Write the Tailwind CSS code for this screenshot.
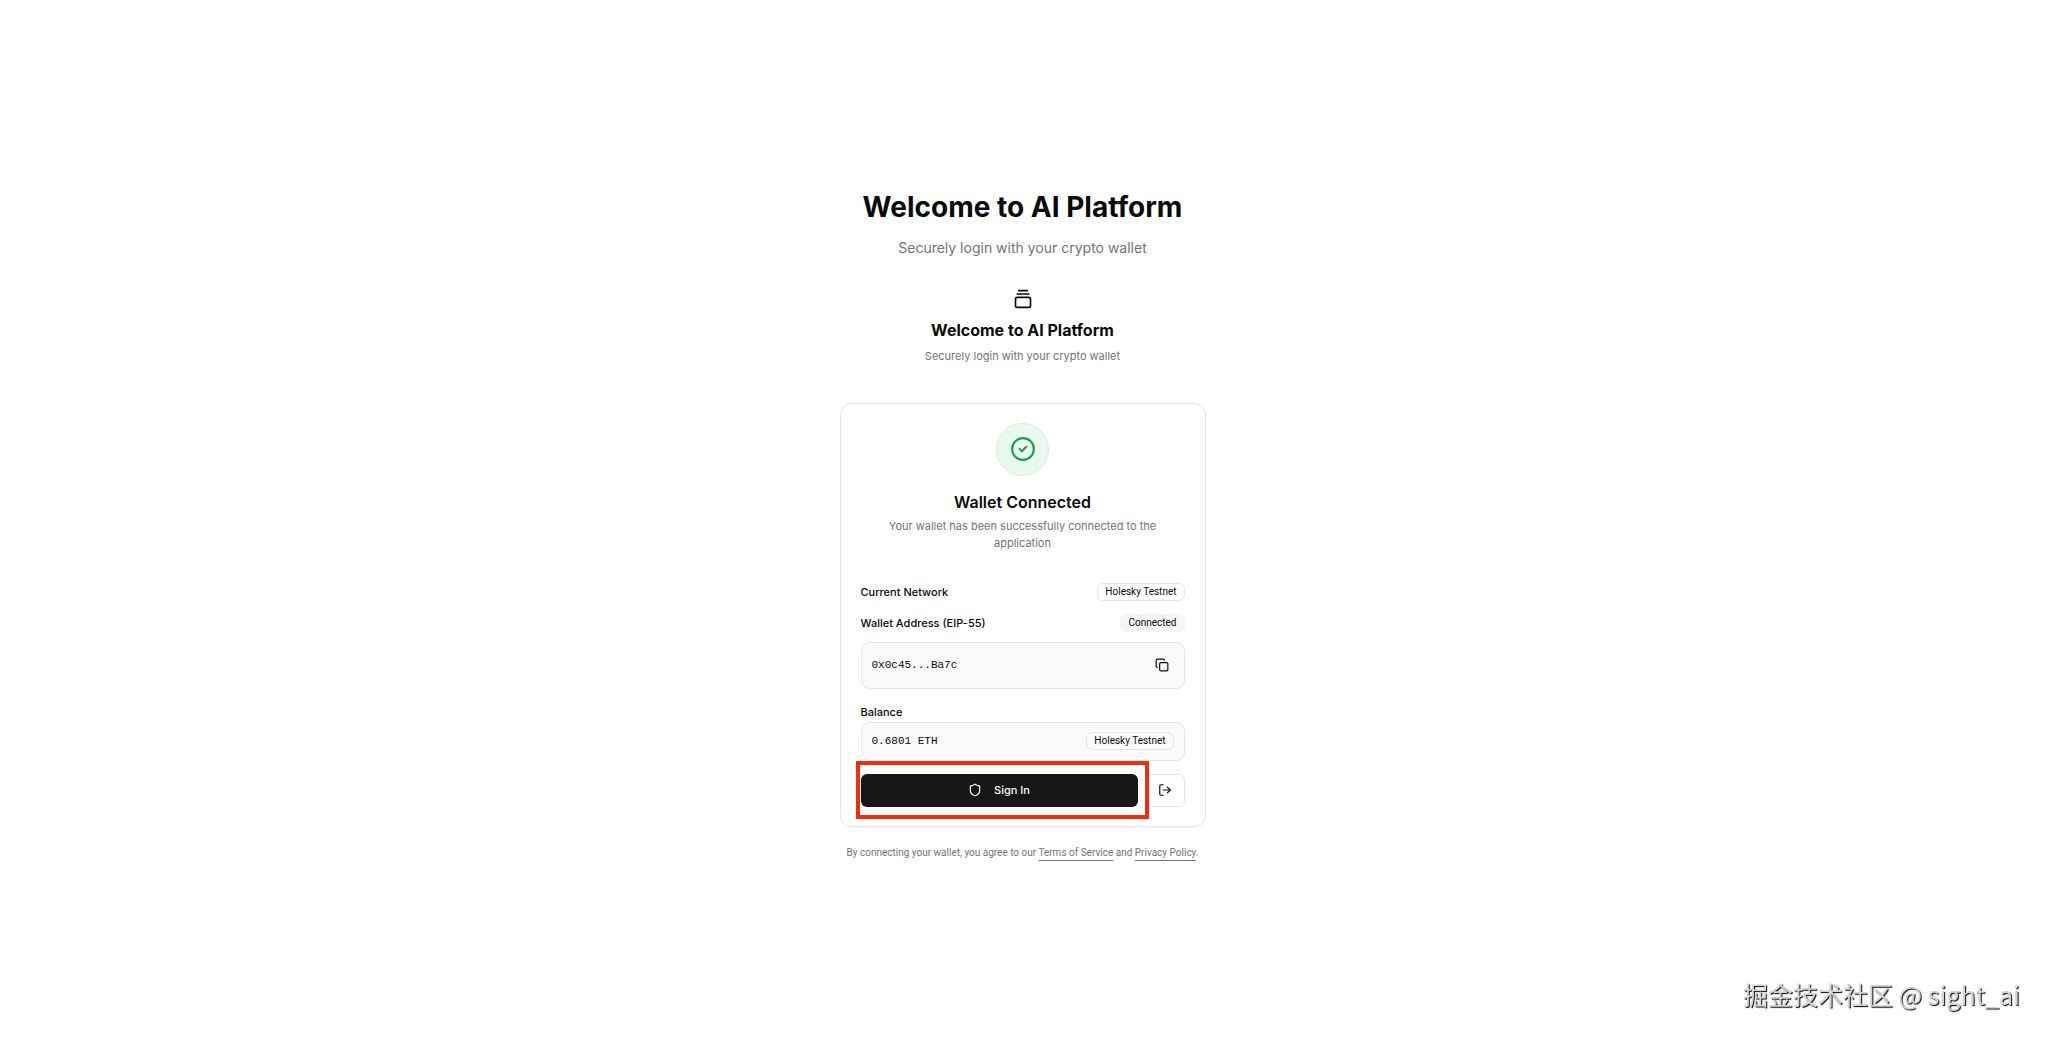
<!DOCTYPE html>
<html lang="en">
<head>
    <meta charset="UTF-8">
    <meta name="viewport" content="width=device-width, initial-scale=1.0">
    <title>Welcome to AI Platform</title>
    <script src="https://cdn.jsdelivr.net/npm/@tailwindcss/browser@4"></script>
</head>
<body class="bg-white text-neutral-950 font-['Inter','Noto_Sans_CJK_SC',sans-serif]">
    <main class="min-h-screen flex flex-col items-center justify-center pt-[9px] pr-[3px]">
        <!-- page heading -->
        <h1 class="text-[28px] leading-9 font-bold">Welcome to AI Platform</h1>
        <p class="mt-[11px] text-[14px] leading-6 text-neutral-500">Securely login with your crypto wallet</p>

        <div class="mt-[29px] flex flex-col items-center">
            <svg class="size-5" viewBox="0 0 24 24" fill="none" stroke="currentColor" stroke-width="2" stroke-linecap="round" stroke-linejoin="round" aria-hidden="true">
                <path d="M7 2h10"/>
                <path d="M5 6h14"/>
                <rect width="18" height="12" x="3" y="10" rx="2"/>
            </svg>
            <h2 class="mt-[9px] text-[16px] leading-6 font-bold">Welcome to AI Platform</h2>
            <p class="mt-1.5 text-[11px] leading-4 text-neutral-500">Securely login with your crypto wallet</p>
        </div>

        <!-- wallet card -->
        <section class="mt-[39px] w-full max-w-[366px] rounded-xl border border-neutral-200 px-5 py-[19px] shadow-xs">
            <div class="flex flex-col items-center text-center">
                <div class="size-[53px] rounded-full border border-[#cdeed9] bg-[#ebf8f0] flex items-center justify-center text-[#16a34a]">
                    <svg class="size-[26px]" viewBox="0 0 24 24" fill="none" stroke="currentColor" stroke-width="2" stroke-linecap="round" stroke-linejoin="round" aria-hidden="true">
                        <circle cx="12" cy="12" r="10"/>
                        <path d="m9 12 2 2 4-4"/>
                    </svg>
                </div>
                <h3 class="mt-4 text-[16px] leading-5 font-semibold">Wallet Connected</h3>
                <p class="mt-1.5 px-4 text-[11px] leading-[17px] text-neutral-500">Your wallet has been successfully connected to the application</p>
            </div>

            <div class="mt-[31px] flex items-center justify-between">
                <span class="text-[11px] leading-4 font-medium">Current Network</span>
                <span class="h-[18px] px-[7px] rounded-md border border-neutral-200 text-[10px] leading-4 font-['Roboto',sans-serif]">Holesky Testnet</span>
            </div>
            <div class="mt-[13px] flex items-center justify-between">
                <span class="text-[11px] leading-4 font-medium">Wallet Address (EIP-55)</span>
                <span class="h-[18px] px-[7px] rounded-md border border-neutral-100 bg-neutral-100 text-[10px] leading-4 font-['Roboto',sans-serif]">Connected</span>
            </div>
            <div class="mt-2.5 h-[47px] px-2.5 flex items-center justify-between rounded-lg border border-neutral-200 bg-neutral-50">
                <code class="text-[11px] font-['Liberation_Mono',monospace]">0x0c45...Ba7c</code>
                <button type="button" aria-label="Copy address" class="size-6 flex items-center justify-center">
                    <svg class="size-3.5" viewBox="0 0 24 24" fill="none" stroke="currentColor" stroke-width="2" stroke-linecap="round" stroke-linejoin="round" aria-hidden="true">
                        <rect width="14" height="14" x="8" y="8" rx="2"/>
                        <path d="M4 16c-1.1 0-2-.9-2-2V4c0-1.1.9-2 2-2h10c1.1 0 2 .9 2 2"/>
                    </svg>
                </button>
            </div>

            <div class="mt-[15px] text-[11px] leading-4 font-medium">Balance</div>
            <div class="mt-0.5 h-[39px] px-2.5 flex items-center justify-between rounded-lg border border-neutral-200 bg-neutral-50">
                <code class="text-[11px] font-['Liberation_Mono',monospace]">0.6801 ETH</code>
                <span class="h-[18px] px-[7px] rounded-md border border-neutral-200 text-[10px] leading-4 font-['Roboto',sans-serif]">Holesky Testnet</span>
            </div>

            <div class="mt-[13px] flex gap-2">
                <div class="relative flex-1">
                    <button type="button" class="w-full h-[33px] flex items-center justify-center gap-3 rounded-md bg-neutral-900 text-neutral-50 text-[11px] font-medium">
                        <svg class="size-3.5" viewBox="0 0 24 24" fill="none" stroke="currentColor" stroke-width="2" stroke-linecap="round" stroke-linejoin="round" aria-hidden="true">
                            <path d="M20 13c0 5-3.5 7.5-7.66 8.95a1 1 0 0 1-.67-.01C7.5 20.5 4 18 4 13V6a1 1 0 0 1 1-1c2 0 4.5-1.2 6.24-2.72a1.17 1.17 0 0 1 1.52 0C14.51 3.81 17 5 19 5a1 1 0 0 1 1 1z"/>
                        </svg>
                        Sign In
                    </button>
                    <!-- highlight frame -->
                    <div class="absolute -top-[13px] -bottom-3 -left-[5px] -right-[11px] border-4 border-[#ee2f0d] pointer-events-none"></div>
                </div>
                <button type="button" aria-label="Disconnect" class="w-[39px] h-[33px] flex items-center justify-center rounded-md border border-neutral-200">
                    <svg class="size-3.5" viewBox="0 0 24 24" fill="none" stroke="currentColor" stroke-width="2" stroke-linecap="round" stroke-linejoin="round" aria-hidden="true">
                        <path d="m16 17 5-5-5-5"/>
                        <path d="M21 12H9"/>
                        <path d="M9 21H5a2 2 0 0 1-2-2V5a2 2 0 0 1 2-2h4"/>
                    </svg>
                </button>
            </div>
        </section>

        <p class="mt-[18px] text-[10px] leading-4 text-neutral-500 font-['Roboto',sans-serif]">By connecting your wallet, you agree to our <a href="#" class="underline underline-offset-4">Terms of Service</a> and <a href="#" class="underline underline-offset-4">Privacy Policy</a>.</p>
    </main>

    <!-- watermark -->
    <div class="fixed right-7 bottom-7 text-[25px] leading-9 text-neutral-300 font-['Noto_Sans_CJK_SC',sans-serif] [text-shadow:1px_1px_1px_#000]">掘金技术社区 @ sight_ai</div>
</body>
</html>
